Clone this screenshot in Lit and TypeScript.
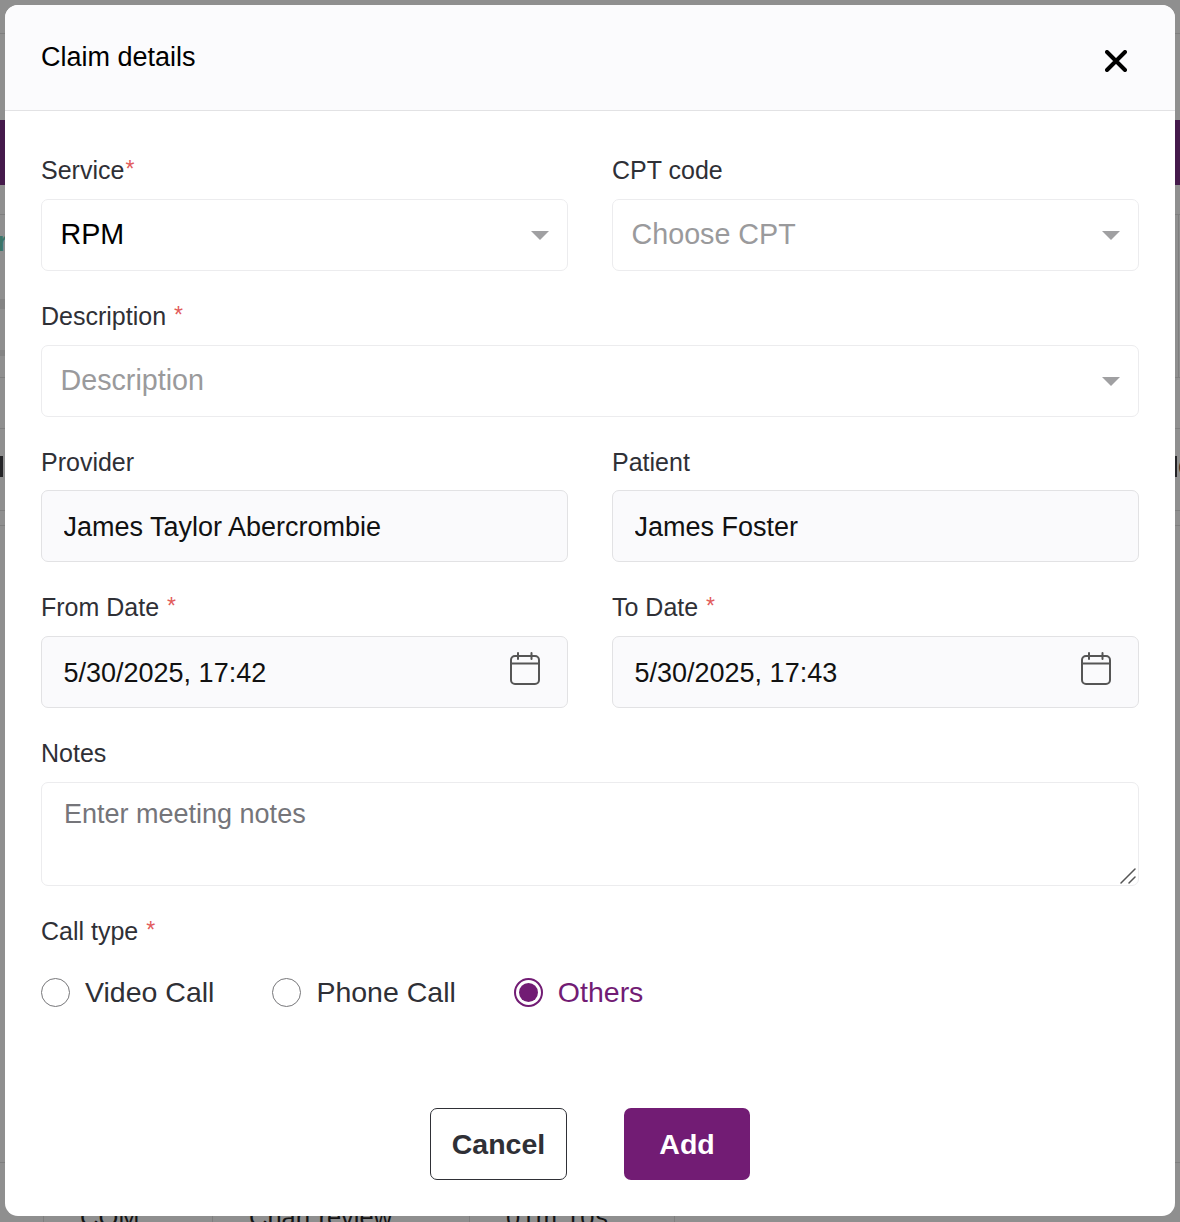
import { LitElement, html, css, svg } from "lit";
import { customElement } from "lit/decorators.js";

const hLines = [33, 214, 377, 428, 510, 525, 1162];
const bands = [
  { top: 299, height: 10 },
  { top: 350, height: 6 },
];
const cols = [43, 212, 469, 674];

const calendar = svg`<svg class="cal" width="30" height="34" viewBox="0 0 30 34" fill="none" stroke="#555" stroke-width="2" stroke-linecap="round">
  <rect x="1" y="4" width="28" height="28" rx="4"/><path d="M1 11.5h28M8 1v6M21.500 1v6"/></svg>`;
const arrow = html`<span class="arrow"></span>`;

@customElement("app-root")
export class AppRoot extends LitElement {
  static styles = css`
    :host { display: block; width: 1180px; height: 1222px; position: relative; overflow: hidden; background: #8f8f8f; font-family: "Liberation Sans", Arial, sans-serif; }
    * { box-sizing: border-box; }
    .behind { position: absolute; inset: 0; color: #141414; }
    .band { position: absolute; left: 0; right: 0; top: 120px; height: 65px; background: #451a4b; }
    .line { position: absolute; left: 0; right: 0; height: 1px; background: #7f7f7f; }
    .shade { position: absolute; left: 0; width: 5px; background: #848484; }
    .col { position: absolute; top: 1162px; bottom: 0; width: 1px; background: #7f7f7f; }
    .edge { position: absolute; left: 1178px; top: 214px; height: 163px; width: 1px; background: #7f7f7f; }
    .cell { position: absolute; top: 1201px; font-size: 25.5px; line-height: 32px; white-space: nowrap; }
    .cell.t { letter-spacing: 0.7px; }
    .r { position: absolute; left: -3px; top: 226px; font-size: 28px; line-height: 32px; color: #3b7568; font-weight: 700; }
    .bar { position: absolute; top: 456px; width: 3px; height: 21px; background: #232326; }
    .bar.a { left: 0; } .bar.b { left: 1175px; width: 2px; }
    .c { position: absolute; left: 1178px; top: 450px; font-size: 28px; line-height: 32px; color: #232326; }

    .modal { position: absolute; left: 5px; top: 5px; width: 1170px; height: 1211px; background: #fff; border-radius: 13px; overflow: hidden; display: flex; flex-direction: column; }
    header { height: 106px; flex: none; background: #fbfbfd; border-bottom: 1px solid #e2e2e4; padding: 0 36px; display: flex; align-items: center; justify-content: space-between; }
    h1 { margin: 0 0 1px; font-size: 27px; line-height: 32px; font-weight: 400; color: #000; }
    .close { width: 22px; height: 22px; margin: 7px 12px 0 0; padding: 0; border: 0; background: none; display: block; }
    form { padding: 46.33px 36px 0; display: grid; grid-template-columns: 527px 527px; column-gap: 44px; row-gap: 32px; }
    .wide { grid-column: 1 / -1; }
    .lab { display: block; height: 28.67px; margin-bottom: 13px; font-size: 25px; line-height: 26.4px; color: #2f3036; }
    .req { color: #e25c5c; font-size: 23px; margin-left: 1px; vertical-align: 2px; line-height: 0; }
    .field { height: 72px; width: 100%; border-radius: 7px; border: 1px solid #ececee; background: #fff; display: flex; align-items: center; justify-content: space-between; font-size: 28.7px; color: #000; padding: 0 18px 0 18.500px; position: relative; }
    .field .ph { color: #9a9a9c; }
    .arrow { width: 0; height: 0; border-left: 9px solid transparent; border-right: 9px solid transparent; border-top: 9px solid #a0a0a2; flex: none; margin-top: 2px; }
    input.text { height: 72px; width: 100%; border-radius: 7px; border: 1px solid #e2e2e4; background: #fafafc; font: 27px "Liberation Sans", Arial, sans-serif; color: #111; padding: 2px 21.500px 0; outline: none; display: block; }
    .dated { position: relative; }
    .dated input.text { padding-top: 3px; }
    .cal { position: absolute; right: 28px; top: 16px; }
    .note { position: relative; height: 104px; }
    textarea { display: block; width: 100%; height: 104px; resize: none; border: 1px solid #ececee; border-radius: 7px; background: #fff; padding: 15px 22px; font: 27px/33px "Liberation Sans", Arial, sans-serif; color: #111; outline: none; }
    textarea::placeholder { color: #75757a; opacity: 1; }
    .grip { position: absolute; right: 2px; bottom: 2px; }
    .radios { display: flex; gap: 58px; margin-top: 29px; height: 34px; align-items: center; }
    .radio { display: flex; align-items: center; gap: 15px; margin: 0; height: 34px; font-size: 28.5px; line-height: 34px; color: #2f3036; }
    .radio.on { color: #721c74; }
    .radio input { appearance: none; margin: 0; width: 29px; height: 29px; border-radius: 50%; border: 1px solid #77777a; background: #fff; flex: none; position: relative; }
    .radio.on input { border: 2px solid #721c74; }
    .radio.on input::after { content: ""; position: absolute; inset: 3px; border-radius: 50%; background: #721c74; }
    .actions { display: flex; justify-content: center; gap: 57px; margin-top: 99px; }
    button.btn { height: 72px; border-radius: 7px; font: 700 28.5px "Liberation Sans", Arial, sans-serif; }
    .cancel { width: 137px; background: #fff; border: 1px solid #2f3036; color: #2f3036; }
    .add { width: 126px; background: #721c74; border: 0; color: #fff; }
  `;

  render() {
    return html`
      <div class="behind">
        <div class="band"></div>
        ${hLines.map((y) => html`<div class="line" style="top:${y}px"></div>`)}
        ${bands.map((b) => html`<div class="shade" style="top:${b.top}px;height:${b.height}px"></div>`)}
        ${cols.map((x) => html`<div class="col" style="left:${x}px"></div>`)}
        <div class="edge"></div>
        <div class="r">r</div>
        <div class="bar a"></div><div class="bar b"></div><div class="c">c</div>
        <div class="cell" style="left:80px">COM</div>
        <div class="cell" style="left:249px">Chart review</div>
        <div class="cell t" style="left:506px">01m 10s</div>
      </div>
      <section class="modal">
        <header>
          <h1>Claim details</h1>
          <button class="close" aria-label="Close">
            <svg width="22" height="22" viewBox="0 0 22 22" stroke="#000" stroke-width="4" stroke-linecap="round"><path d="M2 2l18 18M20 2L2 20"/></svg>
          </button>
        </header>
        <form>
          <div>
            <div class="lab">Service<span class="req">*</span></div>
            <div class="field"><span>RPM</span>${arrow}</div>
          </div>
          <div>
            <div class="lab">CPT code</div>
            <div class="field"><span class="ph">Choose CPT</span>${arrow}</div>
          </div>
          <div class="wide">
            <div class="lab">Description <span class="req">*</span></div>
            <div class="field"><span class="ph">Description</span>${arrow}</div>
          </div>
          <div>
            <div class="lab">Provider</div>
            <input class="text" readonly value="James Taylor Abercrombie" />
          </div>
          <div>
            <div class="lab">Patient</div>
            <input class="text" readonly value="James Foster" />
          </div>
          <div>
            <div class="lab">From Date <span class="req">*</span></div>
            <div class="dated"><input class="text" readonly value="5/30/2025, 17:42" />${calendar}</div>
          </div>
          <div>
            <div class="lab">To Date <span class="req">*</span></div>
            <div class="dated"><input class="text" readonly value="5/30/2025, 17:43" />${calendar}</div>
          </div>
          <div class="wide">
            <div class="lab">Notes</div>
            <div class="note">
              <textarea placeholder="Enter meeting notes"></textarea>
              <svg class="grip" width="17" height="16" viewBox="0 0 17 16" stroke="#555" stroke-width="1.500" stroke-linecap="round"><path d="M1 15L15 1M9 15l6-6"/></svg>
            </div>
          </div>
          <div class="wide">
            <div class="lab">Call type <span class="req">*</span></div>
            <div class="radios">
              <label class="radio"><input type="radio" name="call" />Video Call</label>
              <label class="radio"><input type="radio" name="call" />Phone Call</label>
              <label class="radio on"><input type="radio" name="call" checked />Others</label>
            </div>
          </div>
        </form>
        <div class="actions">
          <button class="btn cancel">Cancel</button>
          <button class="btn add">Add</button>
        </div>
      </section>
    `;
  }
}
